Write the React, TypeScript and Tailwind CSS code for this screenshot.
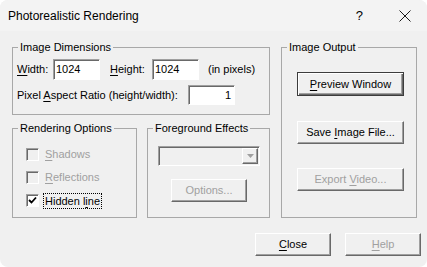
import React from "react";

const raised =
  "border border-t-white border-l-white border-r-[#696969] border-b-[#696969] shadow-[inset_-1px_-1px_0_#a0a0a0]";
const sunken =
  "border border-t-[#a0a0a0] border-l-[#a0a0a0] border-r-white border-b-white shadow-[inset_1px_1px_0_#696969]";

const Btn = ({
  label,
  u,
  rest,
  w,
  h,
  disabled,
  isDefault,
}: {
  label: string;
  u: string;
  rest: string;
  w: string;
  h: string;
  disabled?: boolean;
  isDefault?: boolean;
}) => {
  const frame = isDefault
    ? "border border-[#3c3c3c] shadow-[inset_1px_1px_0_#fff,inset_-1px_-1px_0_#696969,inset_-2px_-2px_0_#a0a0a0]"
    : raised;
  return (
    <button
      className={`${frame} ${w} ${h} bg-[#f0f0f0] flex items-center justify-center leading-none ${
        disabled ? "text-[#a0a0a0]" : "text-black"
      }`}
    >
      <span>
        {label}
        <u className="underline-offset-[2px]">{u}</u>
        {rest}
      </span>
    </button>
  );
};

const Check = ({ checked, disabled }: { checked?: boolean; disabled?: boolean }) => (
  <div
    className={`${sunken} w-[13px] h-[13px] shrink-0 flex items-center justify-center ${
      disabled ? "bg-[#f0f0f0]" : "bg-white"
    }`}
  >
    {checked && (
      <svg width="9" height="9" viewBox="0 0 9 9">
        <path d="M1 4 L3.5 6.5 L8 1.5" stroke="#000" strokeWidth="1.8" fill="none" />
      </svg>
    )}
  </div>
);

const Group = ({
  title,
  className,
  children,
}: {
  title: string;
  className: string;
  children: React.ReactNode;
}) => (
  <fieldset className={`border border-[#a8a8a8] ${className}`}>
    <legend className="ml-[5px] px-[2px] text-[11px] leading-[13px]">{title}</legend>
    {children}
  </fieldset>
);

export default function App() {
  return (
    <div className="w-[427px] h-[267px] bg-[#f0f0f0] rounded-[8px] overflow-hidden text-[11px] text-black font-['Liberation_Sans',Arial,sans-serif] select-none">
      {/* title bar */}
      <div className="h-[31px] flex items-center bg-[#f3f3f3]">
        <div className="pl-[8px] text-[12px] flex-1">Photorealistic Rendering</div>
        <div className="text-[13px] mr-[36px]">?</div>
        <svg className="mr-[16px]" width="12" height="12" viewBox="0 0 12 12">
          <path d="M0.5 0.5 L11.5 11.5 M11.5 0.5 L0.5 11.5" stroke="#1a1a1a" strokeWidth="1" />
        </svg>
      </div>

      <div className="pl-[12px] mt-[10px] flex gap-[11px]">
        {/* left column */}
        <div className="w-[258px] flex flex-col">
          <Group title="Image Dimensions" className="h-[74px]">
            <div className="mt-[5px] flex items-center h-[21px]">
              <span className="ml-[4px] w-[36px]">
                <u className="underline-offset-[2px]">W</u>idth:
              </span>
              <div className={`${sunken} bg-white w-[47px] h-[21px] pl-[2px] flex items-center`}>1024</div>
              <span className="ml-[10px] w-[42px]">
                <u className="underline-offset-[2px]">H</u>eight:
              </span>
              <div className={`${sunken} bg-white w-[47px] h-[21px] pl-[2px] flex items-center`}>1024</div>
              <span className="ml-[9px]">(in pixels)</span>
            </div>
            <div className="mt-[5px] flex items-center h-[20px]">
              <span className="ml-[4px] w-[171px]">
                Pixel <u className="underline-offset-[2px]">A</u>spect Ratio (height/width):
              </span>
              <div className={`${sunken} bg-white w-[47px] h-[20px] pr-[3px] flex items-center justify-end`}>1</div>
            </div>
          </Group>

          <div className="mt-[7px] flex gap-[10px]">
            <Group title="Rendering Options" className="w-[125px] h-[96px]">
              <div className="mt-[13px] ml-[13px] flex flex-col gap-[10px]">
                <div className="flex items-center h-[13px] text-[#a0a0a0]">
                  <Check disabled />
                  <span className="ml-[6px]">
                    <u className="underline-offset-[2px]">S</u>hadows
                  </span>
                </div>
                <div className="flex items-center h-[13px] text-[#a0a0a0]">
                  <Check disabled />
                  <span className="ml-[6px]">
                    <u className="underline-offset-[2px]">R</u>eflections
                  </span>
                </div>
                <div className="flex items-center h-[13px]">
                  <Check checked />
                  <span className="ml-[4px] px-[1px] border border-dotted border-black leading-[14px]">
                    Hidden l<u className="underline-offset-[2px]">i</u>ne
                  </span>
                </div>
              </div>
            </Group>

            <Group title="Foreground Effects" className="w-[123px] h-[96px]">
              <div className="mt-[11px] ml-[10px]">
                <div className={`${sunken} bg-[#f0f0f0] w-[102px] h-[20px] flex justify-end items-center pr-[1px]`}>
                  <div className={`${raised} w-[16px] h-[16px] flex items-center justify-center`}>
                    <svg width="7" height="4" viewBox="0 0 7 4">
                      <path d="M0 0 H7 L3.5 4 Z" fill="#a0a0a0" />
                    </svg>
                  </div>
                </div>
              </div>
              <div className="mt-[13px] ml-[23px]">
                <Btn label="Options..." u="" rest="" w="w-[76px]" h="h-[23px]" disabled />
              </div>
            </Group>
          </div>
        </div>

        {/* right column */}
        <Group title="Image Output" className="w-[136px] h-[177px]">
          <div className="ml-[15px] mt-[18px] flex flex-col">
            <Btn label="" u="P" rest="review Window" w="w-[107px]" h="h-[24px]" isDefault />
            <div className="mt-[25px]">
              <Btn label="Save " u="I" rest="mage File..." w="w-[107px]" h="h-[23px]" />
            </div>
            <div className="mt-[24px]">
              <Btn label="Export " u="V" rest="ideo..." w="w-[107px]" h="h-[23px]" disabled />
            </div>
          </div>
        </Group>
      </div>

      <div className="mt-[15px] pr-[6px] flex justify-end gap-[14px]">
        <Btn label="" u="C" rest="lose" w="w-[76px]" h="h-[23px]" />
        <Btn label="" u="H" rest="elp" w="w-[76px]" h="h-[23px]" disabled />
      </div>
    </div>
  );
}
